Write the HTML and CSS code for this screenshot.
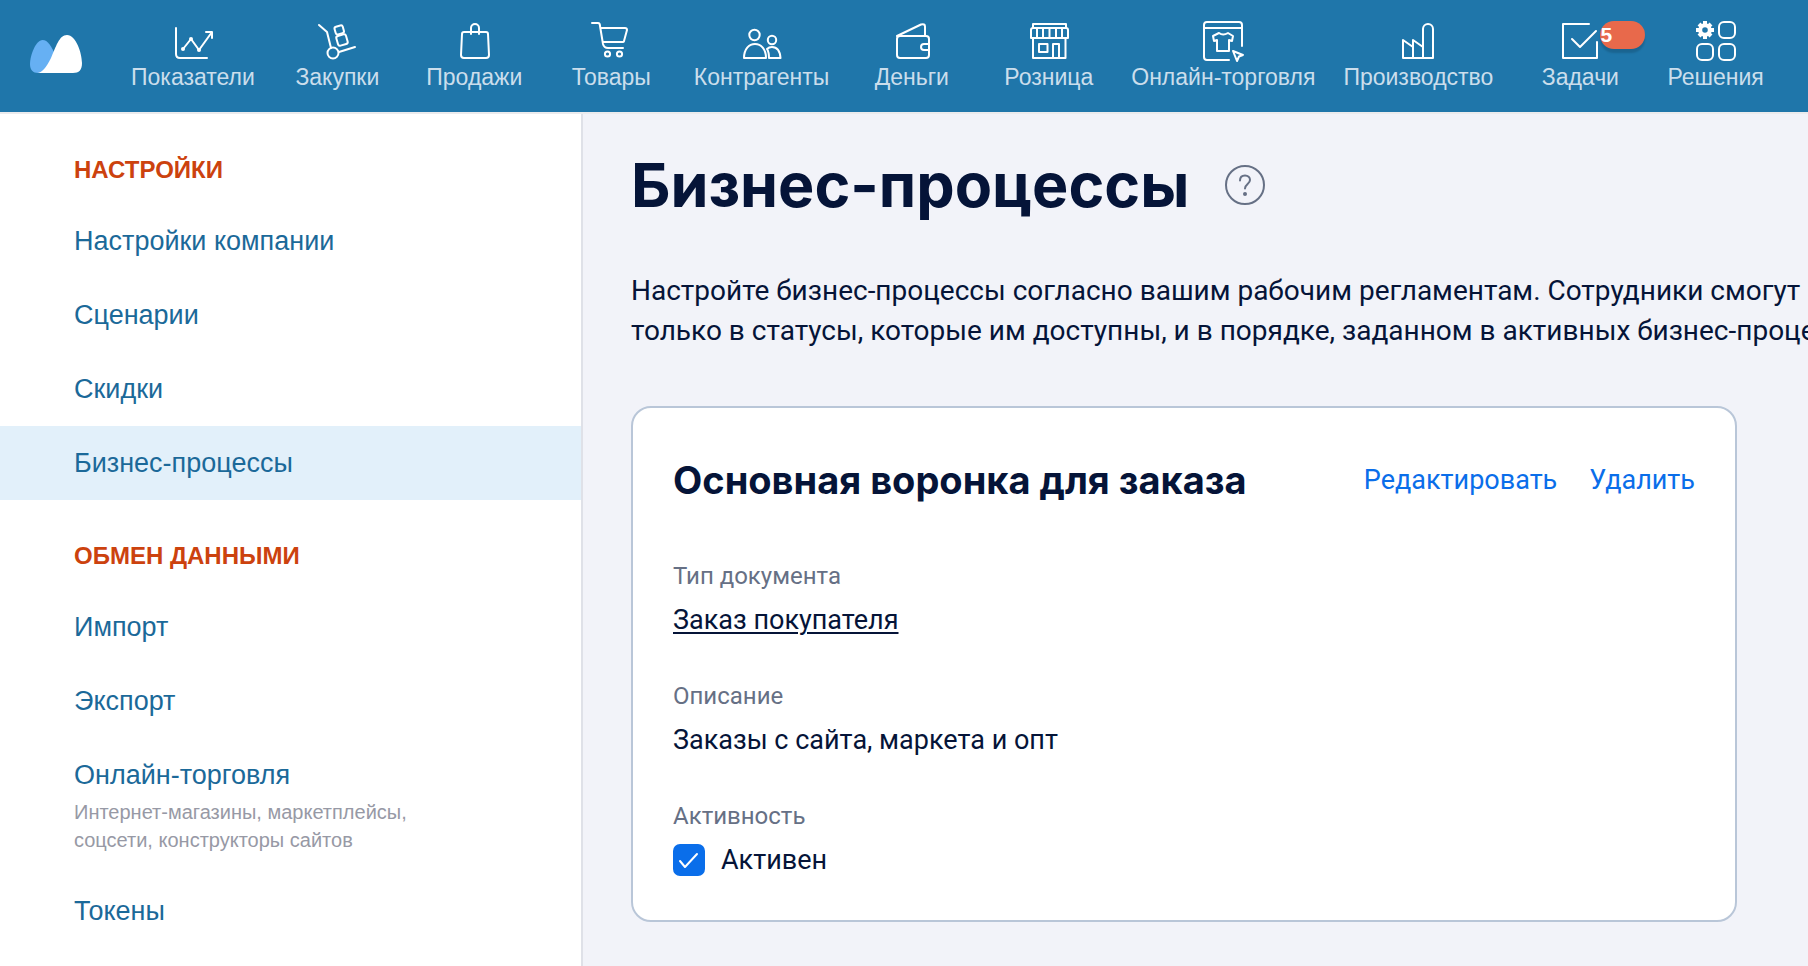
FILE: index.html
```
<!DOCTYPE html>
<html lang="ru">
<head>
    <meta charset="UTF-8">
    <meta name="viewport" content="width=device-width, initial-scale=1.0">
    <title>Бизнес-процессы</title>
    <link rel="stylesheet" href="styles.css">
</head>
<body>

    <header class="topbar">
        <a href="#" class="logo" aria-label="Главная">
            <svg width="52" height="38" viewBox="0 0 52 38">
                <path fill="#66b0f3" d="M12.500 5C6 5 0 20 0 29c0 6 3 9 8 9h12l6-17C21 11 18 5 12.500 5z"/>
                <path fill="#fff" d="M8 38c4-1 8-5 13-15C26 12 29 0 37 0c9 0 15 18 15 28 0 7-3 10-9 10z"/>
            </svg>
        </a>
        <nav class="menu">
            <a href="#" class="menu-item">
                <svg class="icon" viewBox="0 0 40 40"><path d="M3 8v26q0 4 4 4h27M10 29l8-10 8 11 13-18M33 12h6v6"/><g class="fill"><circle cx="10" cy="29" r="2"/><circle cx="18" cy="19" r="2"/><circle cx="26" cy="30" r="2"/></g></svg>
                <span>Показатели</span>
            </a>
            <a href="#" class="menu-item">
                <svg class="icon" viewBox="0 0 40 40"><path d="M2 5l8 7 4 16M22 32l16-5"/><circle cx="16" cy="33" r="5.500"/><rect x="18" y="6" width="8.500" height="8" rx="2" transform="rotate(-16 22 10)"/><rect x="20" y="15" width="10" height="10" rx="2" transform="rotate(-16 25 20)"/></svg>
                <span>Закупки</span>
            </a>
            <a href="#" class="menu-item">
                <svg class="icon" viewBox="0 0 40 40"><path d="M10 12h22q2 0 2 2l1 21q0 3-3 3H10q-3 0-3-3l1-21q0-2 2-2zM17 14V8a4 4 0 0 1 8 0v6"/></svg>
                <span>Продажи</span>
            </a>
            <a href="#" class="menu-item">
                <svg class="icon" viewBox="0 0 40 40"><path d="M1 3h6q2 0 2 3l3 18q1 4 5 4h15M10 8h24q2 0 2 2l-3 11q0 1-2 1H12"/><circle cx="16.500" cy="34" r="2.600"/><circle cx="28.500" cy="34" r="2.600"/></svg>
                <span>Товары</span>
            </a>
            <a href="#" class="menu-item">
                <svg class="icon" viewBox="0 0 40 40"><circle cx="12.500" cy="15" r="5.200"/><path d="M2 38h22c0-9-5-14-11-14S2 29 2 38z"/><circle cx="30" cy="20" r="4.200"/><path d="M25 29q2-2 5-2c5 0 8 4 8.500 11H27q0-6-2-9z"/></svg>
                <span>Контрагенты</span>
            </a>
            <a href="#" class="menu-item">
                <svg class="icon" viewBox="0 0 40 40"><path d="M5 16L29 4.500q4-1 4 2V16"/><rect x="5" y="16" width="32" height="22" rx="3"/><path d="M37 24h-5a3 3 0 0 0 0 6h5"/></svg>
                <span>Деньги</span>
            </a>
            <a href="#" class="menu-item">
                <svg class="icon" viewBox="1 0 40 40"><path d="M5 8V4h33v4M3 18v-8q0-2 2-2h33q2 0 2 2v8zM9 8v10M15 8v10M21.500 8v10M28 8v10M34 8v10M5 18v20h32.500V18M11 24h8.500v8H11zM25 38V24h6v14"/></svg>
                <span>Розница</span>
            </a>
            <a href="#" class="menu-item">
                <svg class="icon" viewBox="0 0 40 40"><path d="M26 40H4q-3 0-3-3V5q0-3 3-3h32q3 0 3 3v21M1 8h38M16 13q4 3 9 0l5 3-1 5-3-1v11H14V20l-3 1-1-5z"/><path d="M30 31l10 4-4 1.500-2 4.500z"/></svg>
                <span>Онлайн-торговля</span>
            </a>
            <a href="#" class="menu-item">
                <svg class="icon" viewBox="0 0 40 40"><path d="M5 38V20l10 7v-7l10 7M15 27v11M25 38V9a5 5 0 0 1 10 0v29zM5 38h30"/></svg>
                <span>Производство</span>
            </a>
            <a href="#" class="menu-item with-badge">
                <svg class="icon" viewBox="0 0 40 40"><path d="M29 4H3v34h34V22M12 19l8 8 16-16"/></svg>
                <span class="badge">5</span>
                <span>Задачи</span>
            </a>
            <a href="#" class="menu-item">
                <svg class="icon" viewBox="0 0 40 40"><rect x="23" y="2" width="16" height="16" rx="5"/><rect x="1" y="24" width="16" height="16" rx="5"/><rect x="23" y="24" width="16" height="16" rx="5"/><circle cx="9" cy="10" r="4.800" stroke-width="4"/><path stroke-width="4" stroke-linecap="butt" d="M9 1v4M9 15v4M0 10h4M14 10h4M3 4l2 2M13 14l2 2M15 4l-2 2M5 14l-2 2"/></svg>
                <span>Решения</span>
            </a>
        </nav>
    </header>

    <div class="page">
        <aside class="sidebar">
            <h3>Настройки</h3>
            <ul>
                <li><a href="#">Настройки компании</a></li>
                <li><a href="#">Сценарии</a></li>
                <li><a href="#">Скидки</a></li>
                <li class="active"><a href="#">Бизнес-процессы</a></li>
            </ul>
            <h3>Обмен данными</h3>
            <ul>
                <li><a href="#">Импорт</a></li>
                <li><a href="#">Экспорт</a></li>
                <li>
                    <a href="#">Онлайн-торговля</a>
                    <p>Интернет-магазины, маркетплейсы,<br>соцсети, конструкторы сайтов</p>
                </li>
                <li><a href="#">Токены</a></li>
            </ul>
        </aside>

        <main class="content">
            <div class="title">
                <h1>Бизнес-процессы</h1>
                <button type="button" class="help" aria-label="Справка">
                    <svg width="40" height="40" viewBox="0 0 40 40"><circle cx="20" cy="20" r="19"/><path d="M15 15.500c0-3 2-5 5-5s5 2 5 4.500c0 4-5 4-5 8.500"/><circle class="dot" cx="20" cy="29" r="2"/></svg>
                </button>
            </div>

            <p class="intro">Настройте бизнес-процессы согласно вашим рабочим регламентам. Сотрудники смогут<br>только в статусы, которые им доступны, и в порядке, заданном в активных бизнес-процессах.</p>

            <section class="card">
                <div class="card-header">
                    <h2>Основная воронка для заказа</h2>
                    <div class="actions">
                        <a href="#">Редактировать</a>
                        <a href="#">Удалить</a>
                    </div>
                </div>
                <div class="field">
                    <div class="label">Тип документа</div>
                    <a href="#" class="doc-link">Заказ покупателя</a>
                </div>
                <div class="field">
                    <div class="label">Описание</div>
                    <div>Заказы с сайта, маркета и опт</div>
                </div>
                <div class="field">
                    <div class="label">Активность</div>
                    <div class="check">
                        <span class="box">
                            <input type="checkbox" id="active" checked>
                            <svg viewBox="0 0 32 32"><path d="M7 17l5 6L24 10"/></svg>
                        </span>
                        <label for="active">Активен</label>
                    </div>
                </div>
            </section>
        </main>
    </div>

</body>
</html>
```
FILE: styles.css
```
* {
    box-sizing: border-box;
}
body {
    margin: 0;
    min-height: 100vh;
    display: flex;
    flex-direction: column;
    overflow: hidden;
    background: #f2f3f9;
    color: #051438;
    font-family: "Liberation Sans", Arial, sans-serif;
}
h1, h2, h3, p, ul {
    margin: 0;
    padding: 0;
}
a {
    text-decoration: none;
}

/* top menu */
.topbar {
    display: flex;
    height: 114px;
    padding-left: 30px;
    background: #1f76aa;
    border-bottom: 2px solid #ebebed;
}
.logo {
    width: 87px;
    padding-top: 35px;
    flex-shrink: 0;
}
.logo svg {
    display: block;
}
.menu {
    display: flex;
}
.menu-item {
    position: relative;
    display: flex;
    flex-direction: column;
    align-items: center;
    min-width: 137px;
    padding: 20px 14px 0;
    color: #cbdeec;
    font-size: 23px;
    line-height: 35px;
    white-space: nowrap;
}
.menu-item.with-badge {
    min-width: 146px;
}
.menu-item:last-child {
    min-width: 0;
}
.icon {
    width: 40px;
    height: 40px;
    overflow: visible;
    fill: none;
    stroke: #fff;
    stroke-width: 2;
    stroke-linecap: round;
    stroke-linejoin: round;
}
.icon .fill {
    fill: #fff;
    stroke: none;
}
.badge {
    position: absolute;
    top: 21px;
    left: 50%;
    width: 45px;
    height: 28px;
    margin-left: 20px;
    border-radius: 14px;
    background: #e8694b;
    box-shadow: 0 4px 2px rgba(0, 0, 0, 0.15);
    color: #fff;
    font-size: 21px;
    font-weight: bold;
    line-height: 28px;
}

/* left column */
.page {
    display: flex;
    flex: 1;
}
.sidebar {
    width: 583px;
    flex-shrink: 0;
    padding-top: 38px;
    background: #fff;
    border-right: 2px solid #dfe1e8;
}
.sidebar h3 {
    padding: 0 74px;
    color: #cc420e;
    font-size: 24px;
    line-height: 36px;
    text-transform: uppercase;
}
.sidebar ul {
    margin: 16px 0 38px;
    list-style: none;
}
.sidebar li {
    padding: 20px 74px;
}
.sidebar li.active {
    background: #e2f0fa;
}
.sidebar li a {
    display: block;
    color: #1b6999;
    font-size: 27px;
    line-height: 34px;
}
.sidebar li p {
    margin-top: 6px;
    color: #9799a5;
    font-size: 20px;
    line-height: 28px;
}

/* content */
.content {
    flex: 1;
    min-width: 0;
    padding: 34px 71px 44px 48px;
    font-family: Roboto, sans-serif;
    font-size: 27px;
    line-height: 40px;
}
.title {
    display: flex;
    align-items: center;
    gap: 36px;
}
h1, h2 {
    font-family: Inter, sans-serif;
    font-weight: 700;
}
h1 {
    font-size: 61px;
    line-height: 74px;
}
.help {
    width: 40px;
    height: 40px;
    padding: 0;
    border: none;
    background: none;
    cursor: pointer;
}
.help svg {
    display: block;
    fill: none;
    stroke: #667085;
    stroke-width: 2;
    stroke-linecap: round;
}
.help .dot {
    fill: #667085;
    stroke: none;
}
.intro {
    margin: 49px 0 55px;
    font-size: 28px;
    white-space: nowrap;
}
.card {
    padding: 40px;
    background: #fff;
    border: 2px solid #b9c6d8;
    border-radius: 20px;
}
.card-header {
    display: flex;
    align-items: center;
    justify-content: space-between;
    margin-bottom: 48px;
}
.card-header h2 {
    font-size: 38px;
    line-height: 64px;
}
.actions {
    display: flex;
    gap: 32px;
}
.actions a {
    color: #0a6eea;
}
.field + .field {
    margin-top: 40px;
}
.label {
    margin-bottom: 8px;
    color: #667085;
    font-size: 24px;
    line-height: 32px;
}
.doc-link {
    color: #051438;
    text-decoration: underline;
    text-decoration-thickness: 2px;
    text-underline-offset: 3px;
}
.check {
    display: flex;
    align-items: center;
    gap: 16px;
}
.box {
    position: relative;
    width: 32px;
    height: 32px;
}
.box input {
    display: block;
    width: 32px;
    height: 32px;
    margin: 0;
    appearance: none;
    border: 2px solid #b9c6d8;
    border-radius: 7px;
}
.box input:checked {
    border-color: #0a6eea;
    background: #0a6eea;
}
.box svg {
    position: absolute;
    inset: 0;
    fill: none;
    stroke: #fff;
    stroke-width: 2;
    stroke-linecap: round;
    stroke-linejoin: round;
    pointer-events: none;
}
```
